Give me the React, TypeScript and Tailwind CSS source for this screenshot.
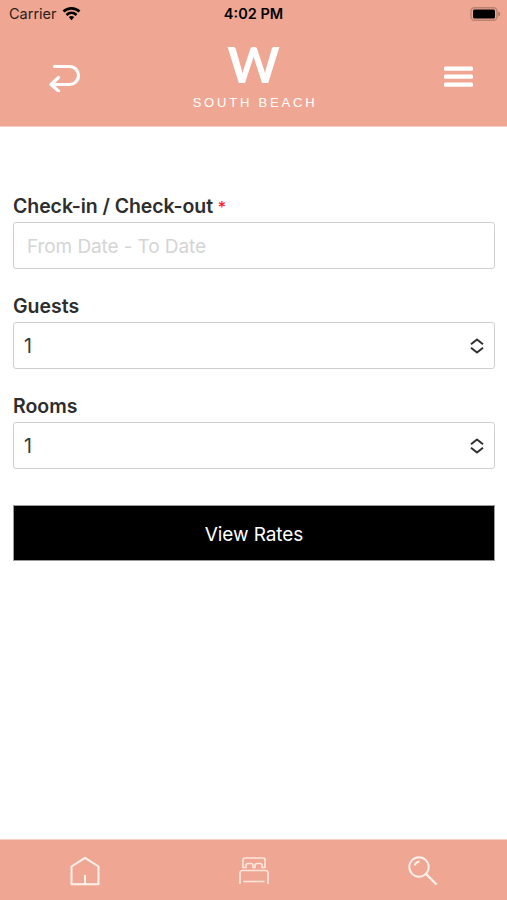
import React, { useState } from 'react';

function StatusBar() {
  return (
    <div className="grid h-7 grid-cols-3 items-center text-black">
      <div className="flex items-center gap-[5px] pl-[9px]">
        <span className="text-[14.5px] leading-7 text-[#2b1d19]">Carrier</span>
        <svg width="19" height="14" viewBox="0 0 18 14" fill="none" stroke="currentColor" strokeWidth="2.7">
          <path d="M1 4.6C5.5.3 12.500.3 17 4.600" />
          <path d="M4 7.900c2.900-2.600 7.100-2.600 10 0" />
          <path d="M6.300 9.900c1.600-1.300 3.800-1.300 5.400 0L9 13.200Z" fill="currentColor" stroke="none" />
        </svg>
      </div>
      <span className="text-center text-[14.5px] font-semibold leading-7">4:02 PM</span>
      <div className="flex justify-end pr-[6px]">
        <svg width="31" height="14" viewBox="0 0 31 14">
          <rect x="1" y=".7" width="26" height="12.600" rx="3.500" fill="none" stroke="#b98270" strokeWidth="1.400" />
          <rect x="3" y="2.500" width="22" height="9" rx="1.500" fill="#000" />
          <path d="M28.300 4.500c2.400 1 2.400 4 0 5Z" fill="#a87565" />
        </svg>
      </div>
    </div>
  );
}

function Header() {
  return (
    <header className="h-[127px] border-b border-[#f5cfc4] bg-[#efa793]">
      <StatusBar />
      <div className="grid h-[98px] grid-cols-3">
        <button className="flex h-[98px] items-center pl-[48px]" aria-label="Back">
          <svg width="33" height="30" viewBox="0 0 33 30" fill="none" stroke="#fff" strokeWidth="3.200" strokeLinecap="round" strokeLinejoin="round">
            <path d="M6.500 4.500H21.500a9 9 0 0 1 0 18H3.500" />
            <path d="M10.500 15.500 3 22.500l7.500 6.500" />
          </svg>
        </button>
        <div className="flex flex-col items-center pt-[11px] text-white">
          <span className="font-['Lato','Inter',sans-serif] text-[50px] font-bold leading-[50px]">W</span>
          <span className="mt-[5px] pl-[3px] font-['Liberation_Sans',sans-serif] text-[13px] leading-[18px] tracking-[2.800px] whitespace-nowrap">SOUTH BEACH</span>
        </div>
        <button className="flex h-[98px] items-center justify-end pr-[34px]" aria-label="Menu">
          <svg width="29" height="22" viewBox="0 0 29 22" fill="#fff">
            <rect y=".5" width="29" height="4.200" rx="1.500" />
            <rect y="8.500" width="29" height="4.200" rx="1.500" />
            <rect y="16.500" width="29" height="4.200" rx="1.500" />
          </svg>
        </button>
      </div>
    </header>
  );
}

interface CountFieldProps {
  label: string;
  value: number;
  onChange: (value: number) => void;
}

function CountField({ label, value, onChange }: CountFieldProps) {
  return (
    <div className="h-[100px]">
      <h2 className="h-[34px] pt-px text-[19.5px] font-semibold leading-[35px] text-[#2d2d2d]">{label}</h2>
      <button
        onClick={() => onChange(value + 1)}
        className="flex h-[47px] w-full items-center justify-between rounded-[3px] border border-[#cecece] pl-[10px] pr-[10px] text-[19.5px] text-[#3a3a3a]"
      >
        <span className="pt-[2px]">{value}</span>
        <svg width="14" height="16" viewBox="0 0 14 16" fill="none" stroke="#2f2f2f" strokeWidth="2" strokeLinejoin="round">
          <path d="M1 6.200 7 1.500l6 4.700M1 9.800l6 4.700 6-4.700" />
        </svg>
      </button>
    </div>
  );
}

function TabBar() {
  return (
    <nav className="grid h-[61px] grid-cols-3 items-center justify-items-center border-t border-[#f5cfc4] bg-[#efa793] pt-px">
      <svg width="30" height="30" viewBox="0 0 30 30" fill="none" stroke="#fff1ec" strokeWidth="2" strokeLinejoin="round">
        <path d="M1.500 10.500 15 1.800l13.500 8.700v17.700h-27Z" />
        <path d="M15 19v9" />
      </svg>
      <svg width="30" height="30" viewBox="0 0 30 30" fill="none" stroke="#fde6de" strokeWidth="1.700" strokeLinejoin="round">
        <path d="M4 12V4a2 2 0 0 1 2-2h18a2 2 0 0 1 2 2v8" />
        <path d="M4 11.500h3V9.500a2 2 0 0 1 2-2h3a2 2 0 0 1 2 2v2h2v-2a2 2 0 0 1 2-2h3a2 2 0 0 1 2 2v2h3" />
        <path d="M1 28V17a2.500 2.500 0 0 1 2.500-2.500h23A2.500 2.500 0 0 1 29 17v11M4.500 25.500h21" />
      </svg>
      <svg width="30" height="30" viewBox="0 0 30 30" fill="none" stroke="#fff1ec" strokeWidth="1.900">
        <circle cx="11" cy="11" r="9.700" />
        <path d="M6.500 9.500a6 6 0 0 1 5-4" />
        <path d="m18 18 10.500 10.500" strokeWidth="2.400" />
      </svg>
    </nav>
  );
}

export default function App() {
  const [dates, setDates] = useState('');
  const [guests, setGuests] = useState(1);
  const [rooms, setRooms] = useState(1);

  return (
    <div className="flex h-screen w-full flex-col overflow-hidden bg-white font-['Inter',sans-serif]">
      <Header />

      <main className="flex flex-1 flex-col pl-[13px] pr-[12px] pt-[61px]">
        <div className="h-[100px]">
          <label htmlFor="dates" className="block h-[34px] pt-px text-[19.5px] font-semibold leading-[35px] tracking-[-0.08px] text-[#2d2d2d]">
            Check-in / Check-out <span className="text-[16px] font-medium text-[#ff1a1a]">*</span>
          </label>
          <input
            id="dates"
            value={dates}
            onChange={e => setDates(e.target.value)}
            placeholder="From Date - To Date"
            className="block h-[47px] w-full rounded-[3px] border border-[#cecece] px-[13px] pt-px text-[19px] tracking-[-0.1px] text-[#333] placeholder:text-[#d4d4d4]"
          />
        </div>
        <CountField label="Guests" value={guests} onChange={setGuests} />
        <CountField label="Rooms" value={rooms} onChange={setRooms} />

        <button className="mt-[17px] h-[56px] w-full border border-[#9a9a9a] bg-black pt-[4px] text-[19px] tracking-[-0.1px] text-white">
          View Rates
        </button>
      </main>

      <TabBar />
    </div>
  );
}
